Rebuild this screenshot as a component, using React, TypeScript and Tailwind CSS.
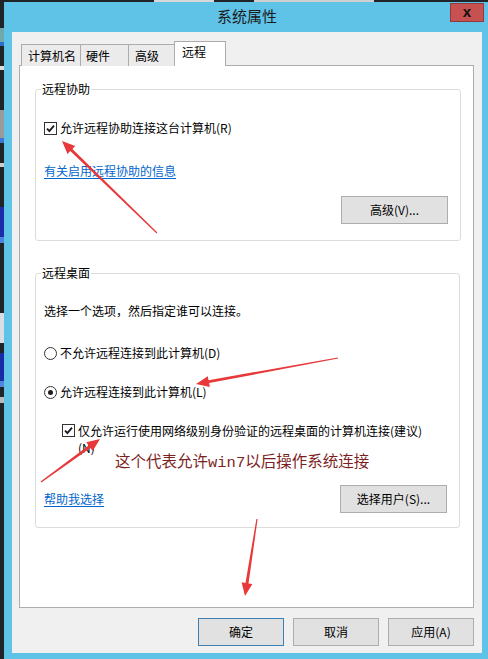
import React from "react";

function arrowPts(x1: number, y1: number, x2: number, y2: number) {
  const dx = x2 - x1, dy = y2 - y1;
  const L = Math.hypot(dx, dy);
  const ux = dx / L, uy = dy / L;
  const nx = -uy, ny = ux;
  const headLen = 13, headW = 5.5, w0 = 0.6, w1 = 1.5;
  const bx = x2 - ux * headLen, by = y2 - uy * headLen;
  const p = [
    [x1 + nx * w0, y1 + ny * w0],
    [bx + nx * w1, by + ny * w1],
    [bx + nx * headW, by + ny * headW],
    [x2, y2],
    [bx - nx * headW, by - ny * headW],
    [bx - nx * w1, by - ny * w1],
    [x1 - nx * w0, y1 - ny * w0],
  ];
  return p.map((q) => q[0].toFixed(1) + "," + q[1].toFixed(1)).join(" ");
}

function Check() {
  return (
    <span className="w-[13px] h-[13px] border border-[#333333] bg-white flex items-center justify-center shrink-0">
      <svg width="11" height="11" viewBox="0 0 11 11">
        <path d="M2 5.6 L4.4 8 L9 2.6" fill="none" stroke="#1e1e1e" strokeWidth="1.9" />
      </svg>
    </span>
  );
}

function Radio({ on }: { on?: boolean }) {
  return (
    <span className="w-[13px] h-[13px] rounded-full border border-[#333333] bg-white flex items-center justify-center shrink-0">
      {on && <span className="w-[5px] h-[5px] rounded-full bg-[#1e1e1e]" />}
    </span>
  );
}

function Btn({ children, w, primary }: { children: React.ReactNode; w: string; primary?: boolean }) {
  return (
    <div
      className={
        "h-[28px] flex items-center justify-center bg-[#e1e1e1] border " +
        (primary ? "border-[#3c7fb1] " : "border-[#adadad] ") +
        w
      }
    >
      {children}
    </div>
  );
}

export default function App() {
  return (
    <div className="w-[488px] h-[659px] bg-[#1f2428] flex overflow-hidden relative text-[12px] leading-[16px] text-black font-['Microsoft_YaHei','Noto_Sans_CJK_SC',sans-serif]">
      {/* desktop strip on the left */}
      <div className="w-[4px] flex flex-col shrink-0">
        <div className="h-[28px]" />
        <div className="h-[14px] bg-[#6fa9aa]" />
        <div className="h-[4px] bg-[#2c6fd0]" />
        <div className="h-[20px]" />
        <div className="h-[4px] bg-[#dddddd]" />
        <div className="h-[40px]" />
        <div className="h-[28px] bg-[#9a9a9a]" />
        <div className="h-[5px] bg-[#3a77d6]" />
        <div className="h-[20px]" />
        <div className="h-[4px] bg-[#cccccc]" />
        <div className="h-[40px]" />
        <div className="h-[30px] bg-[#1c2ca8]" />
        <div className="h-[6px] bg-[#4a86e0]" />
        <div className="h-[70px]" />
        <div className="h-[30px] bg-[#d9dee6]" />
        <div className="h-[10px]" />
        <div className="h-[28px] bg-[#1a2ba6]" />
        <div className="h-[6px] bg-[#4f88de]" />
        <div className="h-[10px]" />
        <div className="h-[6px] bg-[#bbbbbb]" />
      </div>

      <div className="flex-1 flex flex-col">
        <div className="h-[2px] flex">
          <div className="w-[150px]" />
          <div className="w-[60px] bg-[#d8d8d8]" />
          <div className="w-[40px]" />
          <div className="w-[120px] bg-[#cfcfcf]" />
        </div>
        <div className="flex-1 bg-[#5fc3e8] flex flex-col pl-[8px] pr-[6px] pb-[6px] relative">
          {/* title bar */}
          <div className="h-[30px] flex items-center justify-center text-[15px] leading-[20px] text-[#1b1b1b] pb-[2px]">
            系统属性
          </div>
          <div className="absolute top-[1px] right-[4px] w-[34px] h-[19px] bg-[#c75050] border border-[#8f3b3b] flex items-center justify-center">
            <span className="font-['Liberation_Sans',sans-serif] font-bold text-[15px] leading-[15px] text-[#111] -mt-[2px]">x</span>
          </div>

          {/* client */}
          <div className="flex-1 bg-[#f0f0f0] flex flex-col">
            {/* tabs */}
            <div className="mt-[9px] ml-[9px] h-[25px] flex items-end -mb-[1px] relative z-10">
              <div className="w-[60px] h-[22px] bg-[#ebebeb] border border-[#acacac] border-b-0 pl-[6px] flex items-center">计算机名</div>
              <div className="w-[49px] h-[22px] -ml-[1px] bg-[#ebebeb] border border-[#acacac] border-b-0 pl-[5px] flex items-center">硬件</div>
              <div className="w-[47px] h-[22px] -ml-[1px] bg-[#ebebeb] border border-[#acacac] border-b-0 pl-[6px] flex items-center">高级</div>
              <div className="w-[52px] h-[25px] -ml-[1px] bg-white border border-[#acacac] border-b-0 pl-[7px] pb-[5px] flex items-center">远程</div>
            </div>

            {/* tab panel */}
            <div className="ml-[7px] w-[455px] h-[543px] bg-white border border-[#adadad] flex flex-col pl-[15px]">
              {/* group 1 */}
              <div className="mt-[23px] w-[426px] border border-[#dcdcdc] rounded-[3px] relative flex flex-col pb-[16px]">
                <span className="absolute -top-[9px] left-[5px] bg-white px-[1px] leading-[16px]">远程协助</span>
                <div className="mt-[30px] pl-[8px] h-[16px] flex items-center gap-[3px]">
                  <Check />
                  <span>允许远程协助连接这台计算机(R)</span>
                </div>
                <div className="mt-[27px] pl-[8px] h-[16px]">
                  <span className="text-[#0066cc] underline underline-offset-2">有关启用远程协助的信息</span>
                </div>
                <div className="mt-[17px] pr-[12px] flex justify-end">
                  <Btn w="w-[107px]">高级(V)...</Btn>
                </div>
              </div>

              {/* group 2 */}
              <div className="mt-[32px] w-[425px] border border-[#dcdcdc] rounded-[3px] relative flex flex-col pb-[14px]">
                <span className="absolute -top-[9px] left-[5px] bg-white px-[1px] leading-[16px]">远程桌面</span>
                <div className="mt-[29px] pl-[8px] h-[16px]">选择一个选项，然后指定谁可以连接。</div>
                <div className="mt-[26px] pl-[8px] h-[16px] flex items-center gap-[3px]">
                  <Radio />
                  <span>不允许远程连接到此计算机(D)</span>
                </div>
                <div className="mt-[23px] pl-[8px] h-[16px] flex items-center gap-[3px]">
                  <Radio on />
                  <span>允许远程连接到此计算机(L)</span>
                </div>
                <div className="mt-[22px] pl-[26px] flex items-start gap-[3px]">
                  <div className="mt-[2px]">
                    <Check />
                  </div>
                  <span className="w-[352px] leading-[17px]">仅允许运行使用网络级别身份验证的远程桌面的计算机连接(建议)(N)</span>
                </div>
                <div className="mt-[29px] pl-[8px] pr-[12px] flex items-center justify-between">
                  <span className="text-[#0066cc] underline underline-offset-2">帮助我选择</span>
                  <Btn w="w-[107px]">选择用户(S)...</Btn>
                </div>
              </div>
            </div>

            {/* dialog buttons */}
            <div className="mt-[10px] pr-[8px] flex justify-end gap-[9px]">
              <Btn w="w-[86px]" primary>确定</Btn>
              <Btn w="w-[86px]">取消</Btn>
              <Btn w="w-[86px]">应用(A)</Btn>
            </div>
          </div>
        </div>
      </div>

      {/* annotations */}
      <div className="absolute left-[115px] top-[456px] text-[15.5px] leading-[14px] text-[#7d1f1f] whitespace-nowrap font-['Liberation_Mono','Noto_Sans_CJK_SC',monospace]">
        这个代表允许win7以后操作系统连接
      </div>
      <svg className="absolute left-0 top-0 pointer-events-none" width="488" height="659" viewBox="0 0 488 659">
        <polygon points={arrowPts(157, 233, 62, 141)} fill="#e8383a" />
        <polygon points={arrowPts(338, 358, 196, 384)} fill="#e8383a" />
        <polygon points={arrowPts(41, 482, 100, 439)} fill="#e8383a" />
        <polygon points={arrowPts(257, 519, 245, 596)} fill="#e8383a" />
      </svg>
    </div>
  );
}
